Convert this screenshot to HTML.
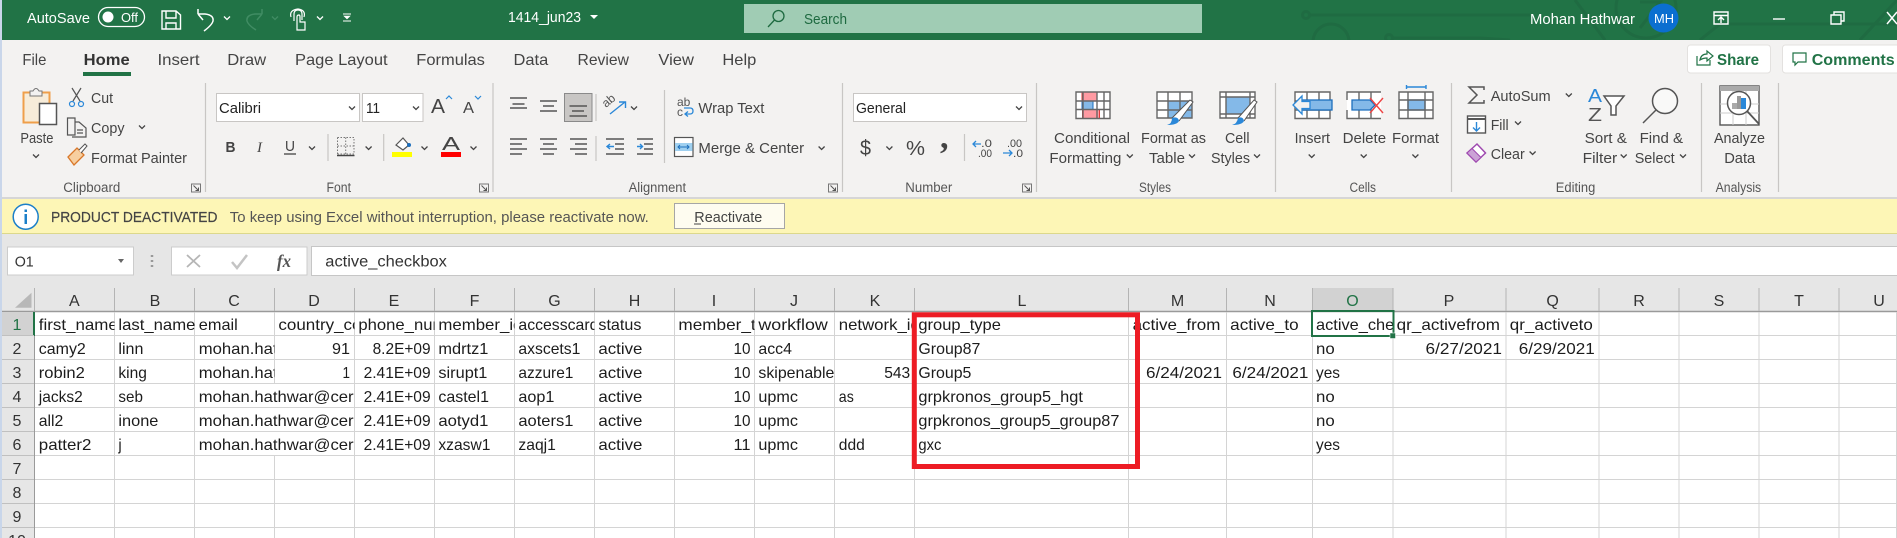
<!DOCTYPE html>
<html><head><meta charset="utf-8"><title>Excel</title>
<style>
html,body{margin:0;padding:0;background:#fff;width:1897px;height:538px;overflow:hidden}
svg{display:block}
text{font-family:"Liberation Sans",sans-serif;white-space:pre}
.r text{font-size:15px;fill:#444}
.l text{font-size:13.5px;fill:#555}
.c text{font-size:16px;fill:#1c1c1c}
.h text{font-size:16px;fill:#333;text-anchor:middle}
.w text{font-size:15px;fill:#fff}
</style></head><body>
<svg width="1897" height="538" viewBox="0 0 1897 538" xmlns="http://www.w3.org/2000/svg">
<defs>
<path id="ch" d="M-3-1.5 0 1.5 3-1.5" fill="none" stroke="#444" stroke-width="1.3"/>
<path id="chw" d="M-3-1.5 0 1.5 3-1.5" fill="none" stroke="#fff" stroke-width="1.3"/>
<g id="lau"><path d="M0 0H9V8H0Z" fill="none" stroke="#777"/><path d="M2 1.5 7 6.5M7 3.5V6.5H4" fill="none" stroke="#555"/></g>
<clipPath id="cA"><rect x="35" y="312" width="79.5" height="24"/></clipPath>
<clipPath id="cB"><rect x="115" y="312" width="79.5" height="24"/></clipPath>
<clipPath id="cC"><rect x="195" y="336" width="79.5" height="48"/></clipPath>
<clipPath id="cCD"><rect x="195" y="384" width="159.5" height="72"/></clipPath>
<clipPath id="cD"><rect x="275" y="312" width="79.5" height="24"/></clipPath>
<clipPath id="cE"><rect x="355" y="312" width="79.5" height="24"/></clipPath>
<clipPath id="cF"><rect x="435" y="312" width="79.5" height="24"/></clipPath>
<clipPath id="cG"><rect x="515" y="312" width="79.5" height="24"/></clipPath>
<clipPath id="cI"><rect x="675" y="312" width="79.5" height="24"/></clipPath>
<clipPath id="cK"><rect x="835" y="312" width="79.5" height="24"/></clipPath>
<clipPath id="cO"><rect x="1313" y="312" width="80" height="24"/></clipPath>
<clipPath id="cT"><rect x="1200" y="0" width="697" height="40"/></clipPath>
</defs>

<!-- backgrounds -->
<rect width="1897" height="538" fill="#fff"/>
<rect width="1897" height="40" fill="#217346"/>
<rect y="40" width="1897" height="157" fill="#f3f2f1"/>
<rect y="197" width="1897" height="2" fill="#d6d6d6"/>
<rect y="199" width="1897" height="34" fill="#fdf6b6"/>
<rect y="233" width="1897" height="1" fill="#dcd88c"/>
<rect y="234" width="1897" height="78" fill="#e6e6e6"/>
<rect width="2" height="538" fill="#c9d6ea"/>

<!-- circuit pattern -->
<g fill="none" stroke="#1f6b42" stroke-width="3" clip-path="url(#cT)">
<path d="M1309 15H1530"/><circle cx="1306" cy="15" r="3.5"/>
<circle cx="1331" cy="42" r="18"/><circle cx="1389" cy="38" r="3.5"/><path d="M1393 38H1480L1510 40"/>
<circle cx="1646" cy="8" r="30"/><path d="M1640 2H1660L1640 28"/>
<path d="M1575 0 1605 40M1700 40 1720 24H1897M1860 40 1897 0"/>
</g>

<!-- title bar -->
<g class="w">
<text x="27" y="23" textLength="63" lengthAdjust="spacingAndGlyphs">AutoSave</text>
<rect x="98.5" y="7.5" width="46" height="19" rx="9.5" fill="none" stroke="#fff" stroke-width="1.3"/>
<circle cx="108" cy="17" r="5.5" fill="#fff"/>
<text x="121" y="22" textLength="17" lengthAdjust="spacingAndGlyphs" style="font-size:13px">Off</text>
<text x="508" y="22" textLength="73" lengthAdjust="spacingAndGlyphs">1414_jun23</text>
<text x="1530" y="24" textLength="105" lengthAdjust="spacingAndGlyphs">Mohan Hathwar</text>
</g>
<g fill="none" stroke="#fff" stroke-width="1.4">
<path d="M162 11H176L180.500 15V29H162ZM166 11V18H176V11M166 29V23H176V29"/>
<path d="M198 14H205Q214 15 213 21 212 25 204 31M198 14V9M198 14 203 20" stroke-width="1.5"/>
<path d="M262 14H255Q246 15 247 21 248 25 256 30M262 14V9M262 14 257 20" stroke="#408c63" stroke-width="1.5"/>
<path d="M294 21V14Q294 10 298 10 302 10 302 14V20M291 17Q289 10 298 9 306 10 304 17M297 30V17Q297 15 299 15 300 15 300 17V22H305V30Z" stroke-width="1.2"/>
<path d="M343 21H351" stroke-width="1"/><path d="M344 16H350L347 19Z" fill="#fff" stroke-width=".6"/>
<path d="M343 14H351" stroke-width="1"/>
<path d="M1714 12H1728V24H1714ZM1714 15.500H1728M1721 23V17M1718 20 1721 17 1724 20"/>
<path d="M1773 19H1785"/>
<path d="M1831 15H1841V24H1831ZM1834 15V12H1844V21H1841"/>
<path d="M1887 12 1897 24M1897 12 1887 24" stroke-width="1.5"/>
</g>
<use href="#chw" x="227" y="18"/><use href="#chw" x="320" y="18"/>
<path d="M272 16.500 275 19.500 278 16.500" fill="none" stroke="#408c63" stroke-width="1.3"/>
<path d="M590 15H598L594 19Z" fill="#fff"/>

<!-- search -->
<rect x="744" y="4" width="458" height="29" fill="#a0ccb4"/>
<g fill="none" stroke="#1e6a40" stroke-width="1.3"><circle cx="778.500" cy="16" r="5.500"/><path d="M774.500 20 768 27"/></g>
<text x="804" y="24" textLength="43" lengthAdjust="spacingAndGlyphs" style="font-size:15px;fill:#1e6a40">Search</text>
<ellipse cx="1663.500" cy="18" rx="15" ry="14.500" fill="#0b6fd0"/>
<text x="1654" y="23" textLength="20" lengthAdjust="spacingAndGlyphs" style="font-size:13px;fill:#fff">MH</text>

<!-- tabs -->
<g class="r">
<text x="22.400" y="65" textLength="24" lengthAdjust="spacingAndGlyphs" style="font-size:16px">File</text>
<text x="83.700" y="65" textLength="46" lengthAdjust="spacingAndGlyphs" style="font-size:16px;font-weight:bold;fill:#333">Home</text>
<text x="157.500" y="65" textLength="42" lengthAdjust="spacingAndGlyphs" style="font-size:16px">Insert</text>
<text x="227.300" y="65" textLength="38.800" lengthAdjust="spacingAndGlyphs" style="font-size:16px">Draw</text>
<text x="295" y="65" textLength="92.600" lengthAdjust="spacingAndGlyphs" style="font-size:16px">Page Layout</text>
<text x="416.300" y="65" textLength="68.600" lengthAdjust="spacingAndGlyphs" style="font-size:16px">Formulas</text>
<text x="513.500" y="65" textLength="34.700" lengthAdjust="spacingAndGlyphs" style="font-size:16px">Data</text>
<text x="577.500" y="65" textLength="51.400" lengthAdjust="spacingAndGlyphs" style="font-size:16px">Review</text>
<text x="658.400" y="65" textLength="35.500" lengthAdjust="spacingAndGlyphs" style="font-size:16px">View</text>
<text x="722.400" y="65" textLength="33.900" lengthAdjust="spacingAndGlyphs" style="font-size:16px">Help</text>
</g>
<rect x="83" y="72" width="48" height="4" fill="#217346"/>

<!-- share / comments -->
<rect x="1687.500" y="45" width="83" height="28" rx="3" fill="#fff" stroke="#e3e1df"/>
<rect x="1782.500" y="45" width="120" height="28" rx="3" fill="#fff" stroke="#e3e1df"/>
<g fill="none" stroke="#217346" stroke-width="1.200">
<path d="M1697 56V65H1710V60M1700 60Q1701 54 1707 54V51L1713 56 1707 61V58Q1703 58 1700 60Z"/>
<path d="M1793 53H1806V62H1798L1795 65V62H1793Z"/>
</g>
<text x="1717" y="65" textLength="42" lengthAdjust="spacingAndGlyphs" style="font-size:16px;font-weight:bold;fill:#217346">Share</text>
<text x="1811.700" y="65" textLength="83" lengthAdjust="spacingAndGlyphs" style="font-size:16px;font-weight:bold;fill:#217346">Comments</text>

<!-- separators -->
<g stroke="#c8c6c4" stroke-width="1.200">
<path d="M205.500 83V192M493 83V192M842.500 83V192M1036.500 83V192M1275.500 83V192M1451.500 83V192M1701.500 83V192M1778.500 83V192"/>
<path d="M328 134V161M383.700 134V161M596 94V121M596 136V161M664.500 90V163M964.500 134V161"/>
</g>

<!-- clipboard -->
<rect x="23.500" y="92.500" width="26" height="30" fill="#f7ecd9" stroke="#ef9f4a" stroke-width="2"/>
<path d="M30 96V91H33Q36 86 39 91H42V96Z" fill="#f3f2f1" stroke="#777"/>
<rect x="39.500" y="103.500" width="17" height="21" fill="#fff" stroke="#555" stroke-width="1.500"/>
<g fill="none" stroke-width="1.200">
<path d="M72 88 80 101M81 88 73 101" stroke="#555"/>
<circle cx="72" cy="104" r="2.500" stroke="#2b88d8"/><circle cx="81" cy="104" r="2.500" stroke="#2b88d8"/>
<path d="M67.500 118H75V135H67.500ZM75 122H79L86 128V137H72" stroke="#555"/><path d="M77 130H83M77 133H83" stroke="#555"/>
</g>
<path d="M68 157 77 148 84 155 74 165Z" fill="#f7cfa0" stroke="#d9782a" stroke-width="1.300"/>
<path d="M79 150 85 144 87 146 81 153" fill="#fff" stroke="#555"/>
<g class="r">
<text x="20.400" y="143" textLength="33" lengthAdjust="spacingAndGlyphs">Paste</text>
<text x="91" y="103" textLength="22" lengthAdjust="spacingAndGlyphs">Cut</text>
<text x="91" y="133" textLength="33.500" lengthAdjust="spacingAndGlyphs">Copy</text>
<text x="91" y="163" textLength="96" lengthAdjust="spacingAndGlyphs">Format Painter</text>
</g>
<use href="#ch" x="36" y="156"/><use href="#ch" x="142" y="127"/>
<g class="l">
<text x="63.300" y="192" textLength="57" lengthAdjust="spacingAndGlyphs">Clipboard</text>
<text x="326.500" y="192" textLength="24.500" lengthAdjust="spacingAndGlyphs">Font</text>
<text x="628.600" y="192" textLength="57.500" lengthAdjust="spacingAndGlyphs">Alignment</text>
<text x="905.300" y="192" textLength="47" lengthAdjust="spacingAndGlyphs">Number</text>
<text x="1139" y="192" textLength="32" lengthAdjust="spacingAndGlyphs">Styles</text>
<text x="1349.500" y="192" textLength="26.500" lengthAdjust="spacingAndGlyphs">Cells</text>
<text x="1555.800" y="192" textLength="39.500" lengthAdjust="spacingAndGlyphs">Editing</text>
<text x="1715.600" y="192" textLength="45.600" lengthAdjust="spacingAndGlyphs">Analysis</text>
</g>
<use href="#lau" x="191.500" y="184"/><use href="#lau" x="479.500" y="184"/><use href="#lau" x="828.500" y="184"/><use href="#lau" x="1022.500" y="184"/>

<!-- font -->
<rect x="216.500" y="93.500" width="143" height="28" fill="#fff" stroke="#c8c6c4"/>
<rect x="362.500" y="93.500" width="60.500" height="28" fill="#fff" stroke="#c8c6c4"/>
<g class="r">
<text x="219" y="113" textLength="42" lengthAdjust="spacingAndGlyphs" style="fill:#222">Calibri</text>
<text x="366" y="113" textLength="14" lengthAdjust="spacingAndGlyphs" style="fill:#222">11</text>
<text x="431" y="113" textLength="14" lengthAdjust="spacingAndGlyphs" style="font-size:20px">A</text>
<text x="463" y="113" textLength="11" lengthAdjust="spacingAndGlyphs" style="font-size:16px">A</text>
<text x="225.500" y="152" textLength="10" lengthAdjust="spacingAndGlyphs" style="font-size:15px;font-weight:bold">B</text>
<text x="257" y="152" style="font-size:15px;font-style:italic;font-family:'Liberation Serif',serif">I</text>
<text x="285" y="151" textLength="10" lengthAdjust="spacingAndGlyphs" style="font-size:15px">U</text>
<text x="442" y="150" textLength="18" lengthAdjust="spacingAndGlyphs" style="font-size:18px">A</text>
</g>
<path d="M284 154H296" stroke="#444" stroke-width="1.300"/>
<path d="M446 99 449 96 452 99M475 96 478 99 481 96" fill="none" stroke="#2b88d8" stroke-width="1.200"/>
<use href="#ch" x="352" y="108"/><use href="#ch" x="416" y="108"/><use href="#ch" x="312" y="148"/><use href="#ch" x="368.600" y="148"/><use href="#ch" x="424.500" y="148"/><use href="#ch" x="473.500" y="148"/>
<path d="M337.500 137.500H354V154H337.500M337.500 137.500V154M345.700 137.500V154M337.500 146H354" fill="none" stroke="#777" stroke-dasharray="1.500 1.500"/>
<path d="M337 155.500H354.500" stroke="#444" stroke-width="1.500"/>
<path d="M396 145 403 138 409 145 403 150Z" fill="#fff" stroke="#555" stroke-width="1.200"/><circle cx="409" cy="145" r="2" fill="#1d6fbd"/>
<rect x="392" y="152" width="20" height="5" fill="#ff0"/>
<rect x="441" y="152" width="20" height="5" fill="#f00"/>

<!-- alignment -->
<rect x="564.500" y="93.500" width="27.500" height="28" fill="#c8c6c4" stroke="#8a8a8a"/>
<g stroke="#555" stroke-width="1.500">
<path d="M510 98H527M512.500 104H524.500M510 108H527"/>
<path d="M540 101H557M543 106H554M540 111H557"/>
<path d="M569.500 106H587M572 111H584M569.500 116H587"/>
<path d="M510 139H527M510 144H522M510 149H527M510 154H522"/>
<path d="M540 139H557M543 144H554M540 149H557M543 154H554"/>
<path d="M570 139H587M575 144H587M570 149H587M575 154H587"/>
<path d="M606 139H624M615 144H624M615 149H624M606 154H624"/>
<path d="M637 139H653M644 144H653M644 149H653M637 154H653"/>
</g>
<path d="M614 146.500H607M610 144 607 146.500 610 149M637 146.500H642M640 144 642.500 146.500 640 149" fill="none" stroke="#2b88d8" stroke-width="1.400"/>
<text x="606" y="108" transform="rotate(-40 606 108)" style="font-size:12px;fill:#555">ab</text>
<path d="M610 114 625 102M619 102H625.500V108" fill="none" stroke="#2b88d8" stroke-width="1.400"/>
<use href="#ch" x="634" y="108"/>
<text x="677" y="106" style="font-size:12px;fill:#555">ab</text>
<text x="677" y="116" style="font-size:12px;fill:#555">c</text>
<path d="M686 114H690Q693 114 693 111 693 108 690 108H684M688 111.500 685 114 688 116.500" fill="none" stroke="#2b88d8" stroke-width="1.300"/>
<rect x="674.500" y="137.500" width="18.500" height="19" fill="#fff" stroke="#555" stroke-width="1.200"/>
<rect x="675" y="143" width="17.500" height="8" fill="#9fd0f0"/>
<path d="M678 147H689M680 145 678 147 680 149M687 145 689 147 687 149" fill="none" stroke="#1d6fbd"/>
<g class="r">
<text x="698.400" y="113" textLength="66" lengthAdjust="spacingAndGlyphs">Wrap Text</text>
<text x="698.400" y="153" textLength="105.700" lengthAdjust="spacingAndGlyphs">Merge &amp; Center</text>
</g>
<use href="#ch" x="821.600" y="148"/>

<!-- number -->
<rect x="853.500" y="93.500" width="173" height="28" fill="#fff" stroke="#c8c6c4"/>
<g class="r">
<text x="856" y="113" textLength="50" lengthAdjust="spacingAndGlyphs" style="fill:#222">General</text>
<text x="860" y="155" textLength="11" lengthAdjust="spacingAndGlyphs" style="font-size:21px">$</text>
<text x="906" y="155" textLength="19" lengthAdjust="spacingAndGlyphs" style="font-size:20px">%</text>
<text x="940" y="148" style="font-size:34px;font-weight:bold;font-family:'Liberation Serif',serif">,</text>
<text x="981" y="147" textLength="11" lengthAdjust="spacingAndGlyphs" style="font-size:11px">.0</text>
<text x="978" y="157" textLength="14" lengthAdjust="spacingAndGlyphs" style="font-size:11px">.00</text>
<text x="1007" y="147" textLength="15" lengthAdjust="spacingAndGlyphs" style="font-size:11px">.00</text>
<text x="1013" y="157" textLength="10" lengthAdjust="spacingAndGlyphs" style="font-size:11px">.0</text>
</g>
<path d="M981 144H973M976 141 973 144 976 147M1003 153H1012M1009 150 1012 153 1009 156" fill="none" stroke="#2b88d8" stroke-width="1.300"/>
<use href="#ch" x="1019" y="108"/><use href="#ch" x="889.400" y="148"/>

<!-- styles icons -->
<g>
<rect x="1076" y="92" width="34" height="26.500" fill="#fff"/>
<rect x="1082" y="92" width="15" height="9" fill="#ff9aa2" stroke="#e03a3a"/>
<rect x="1082.500" y="109.500" width="17" height="9" fill="#ff9aa2" stroke="#e03a3a"/>
<rect x="1082" y="101" width="11" height="8.500" fill="#84b9e8" stroke="#1d6fbd"/>
<path d="M1076 92H1110V118.500H1076ZM1083 92V118.500M1097 92V118.500M1104 92V118.500M1076 101H1110M1076 109.500H1110" fill="none" stroke="#666" stroke-width="1.400"/>
</g>
<g>
<rect x="1157" y="92" width="35" height="26" fill="#fff"/>
<rect x="1168" y="101" width="24" height="17" fill="#84b9e8" stroke="#1d6fbd"/>
<path d="M1157 92H1192V118H1157ZM1168 92V118M1180 92V118M1157 101H1192M1157 110H1192" fill="none" stroke="#666" stroke-width="1.400"/>
<path d="M1172 118 1190 100 1193 102 1179 121" fill="#fff" stroke="#555"/>
<path d="M1167 125Q1172 124 1172 118 1178 116 1179 121 1177 125 1167 125Z" fill="#2b88d8"/>
</g>
<g>
<rect x="1220" y="92" width="35" height="26" fill="#fff"/>
<rect x="1226" y="97" width="24" height="17" fill="#84b9e8" stroke="#1d6fbd"/>
<path d="M1220 92H1255V118H1220ZM1226 92V118M1250 92V118M1220 97H1255M1220 114H1255" fill="none" stroke="#666" stroke-width="1.400"/>
<path d="M1238 118 1254 100 1257 102 1244 121" fill="#fff" stroke="#555"/>
<path d="M1232 125Q1237 124 1238 118 1243 116 1244 121 1242 125 1232 125Z" fill="#2b88d8"/>
</g>
<g class="r">
<text x="1054" y="143" textLength="76" lengthAdjust="spacingAndGlyphs">Conditional</text>
<text x="1049.400" y="163" textLength="72" lengthAdjust="spacingAndGlyphs">Formatting</text>
<text x="1141" y="143" textLength="65" lengthAdjust="spacingAndGlyphs">Format as</text>
<text x="1149" y="163" textLength="36" lengthAdjust="spacingAndGlyphs">Table</text>
<text x="1225" y="143" textLength="24.500" lengthAdjust="spacingAndGlyphs">Cell</text>
<text x="1211" y="163" textLength="39" lengthAdjust="spacingAndGlyphs">Styles</text>
<text x="1294.600" y="143" textLength="35.400" lengthAdjust="spacingAndGlyphs">Insert</text>
<text x="1342.600" y="143" textLength="43.500" lengthAdjust="spacingAndGlyphs">Delete</text>
<text x="1392" y="143" textLength="47" lengthAdjust="spacingAndGlyphs">Format</text>
<text x="1490.700" y="101" textLength="60" lengthAdjust="spacingAndGlyphs">AutoSum</text>
<text x="1490.700" y="130" textLength="18" lengthAdjust="spacingAndGlyphs">Fill</text>
<text x="1490.700" y="159" textLength="34" lengthAdjust="spacingAndGlyphs">Clear</text>
<text x="1584.600" y="143" textLength="42.300" lengthAdjust="spacingAndGlyphs">Sort &amp;</text>
<text x="1582.600" y="163" textLength="34.600" lengthAdjust="spacingAndGlyphs">Filter</text>
<text x="1639.600" y="143" textLength="43.500" lengthAdjust="spacingAndGlyphs">Find &amp;</text>
<text x="1634.700" y="163" textLength="40" lengthAdjust="spacingAndGlyphs">Select</text>
<text x="1714" y="143" textLength="51" lengthAdjust="spacingAndGlyphs">Analyze</text>
<text x="1724.200" y="163" textLength="31" lengthAdjust="spacingAndGlyphs">Data</text>
</g>
<use href="#ch" x="1129.800" y="156"/><use href="#ch" x="1192" y="156"/><use href="#ch" x="1257" y="156"/>
<use href="#ch" x="1311.700" y="156"/><use href="#ch" x="1363.700" y="156"/><use href="#ch" x="1415.400" y="156"/>
<use href="#ch" x="1568.800" y="95"/><use href="#ch" x="1518" y="123"/><use href="#ch" x="1532.600" y="153"/>
<use href="#ch" x="1623.700" y="156"/><use href="#ch" x="1683" y="156"/>

<!-- cells icons -->
<g>
<rect x="1295" y="92" width="35" height="26.500" fill="#fff"/>
<path d="M1295 92H1330V118.500H1295ZM1307 92V118.500M1319 92V118.500M1295 101H1330M1295 110H1330" fill="none" stroke="#666" stroke-width="1.400"/>
<rect x="1302" y="100" width="30" height="10" fill="#84b9e8" stroke="#1d6fbd" stroke-width="1.300"/>
<path d="M1293 105 1302 96V101.500H1310V108.500H1302V114Z" fill="#f3f2f1" stroke="#2b88d8" stroke-width="1.300"/>
</g>
<g>
<rect x="1347" y="92" width="34" height="26.500" fill="#fff"/>
<path d="M1347 100V92H1381M1347 110V118.500H1381M1359 92V100M1359 110V118.500M1371 92V118.500" fill="none" stroke="#666" stroke-width="1.400"/>
<path d="M1352 100H1370L1375 105 1370 110H1352Z" fill="#84b9e8" stroke="#1d6fbd" stroke-width="1.300"/>
<path d="M1370 98 1383 113M1383 98 1370 113" stroke="#ee4444" stroke-width="1.400"/>
</g>
<g>
<rect x="1399" y="92" width="34" height="26.500" fill="#fff"/>
<rect x="1408" y="100" width="17" height="10" fill="#84b9e8" stroke="#1d6fbd" stroke-width="1.300"/>
<path d="M1399 92H1433V118.500H1399ZM1408 92V118.500M1425 92V118.500M1399 100H1433M1399 110H1433" fill="none" stroke="#666" stroke-width="1.400"/>
<path d="M1406.500 87H1426M1406.500 85V89M1426 85V89" stroke="#2b88d8" stroke-width="1.400"/>
</g>

<!-- editing icons -->
<path d="M1484 90V87H1469L1477 95 1469 103H1484V100" fill="none" stroke="#555" stroke-width="1.500"/>
<rect x="1467.500" y="116" width="18" height="17" fill="#fff" stroke="#555" stroke-width="1.400"/>
<path d="M1467.500 119H1485.500" stroke="#555" stroke-width="2"/>
<path d="M1476.500 122V131M1473 127.500 1476.500 131 1480 127.500" fill="none" stroke="#2b88d8" stroke-width="1.400"/>
<path d="M1467 153 1477 144 1485.500 153 1476 162Z" fill="#fff" stroke="#9f4ab0" stroke-width="1.500"/>
<path d="M1467 153 1472 148.500 1481 157.500 1476 162Z" fill="#cba2d6" stroke="#9f4ab0" stroke-width="1"/>
<text x="1588" y="102" textLength="14" lengthAdjust="spacingAndGlyphs" style="font-size:18px;fill:#2b88d8">A</text>
<text x="1588" y="121" textLength="14" lengthAdjust="spacingAndGlyphs" style="font-size:18px;fill:#555">Z</text>
<path d="M1604 96H1624L1616 106V115H1611V106Z" fill="#fff" stroke="#555" stroke-width="1.500"/>
<circle cx="1665" cy="101" r="12.500" fill="#fff" fill-opacity=".5" stroke="#555" stroke-width="1.500"/>
<path d="M1656 110 1643 123" stroke="#555" stroke-width="1.500"/>

<!-- analyze icon -->
<rect x="1720" y="86" width="39" height="39" fill="#fff" stroke="#555" stroke-width="1.400"/>
<rect x="1720" y="86" width="39" height="5" fill="#aaa"/>
<path d="M1720 104H1759M1720 113H1759M1733 91V125M1746 91V125" stroke="#ccc"/>
<circle cx="1739" cy="103" r="11.500" fill="#fff" stroke="#555" stroke-width="1.500"/>
<rect x="1732" y="103" width="5" height="6" fill="#aaa"/><rect x="1737" y="96" width="4" height="13" fill="#999"/><rect x="1741" y="98" width="5" height="11" fill="#2b88d8"/>
<path d="M1747 111 1759 124" stroke="#555" stroke-width="1.800"/>

<!-- info bar -->
<circle cx="25.700" cy="216.700" r="12.500" fill="#fff" stroke="#1b7fc9" stroke-width="1.500"/>
<rect x="24.500" y="214" width="2.500" height="10" fill="#1b7fc9"/><rect x="24.500" y="209.500" width="2.500" height="2.500" fill="#1b7fc9"/>
<text x="51" y="222" textLength="166.500" lengthAdjust="spacingAndGlyphs" style="font-size:15px;fill:#444;stroke:#444;stroke-width:.2">PRODUCT DEACTIVATED</text>
<text x="229.800" y="222" textLength="419" lengthAdjust="spacingAndGlyphs" style="font-size:15px;fill:#555">To keep using Excel without interruption, please reactivate now.</text>
<rect x="674.500" y="203.500" width="110" height="25" fill="#fefcf0" stroke="#a6a6a6"/>
<text x="694.300" y="222" textLength="68" lengthAdjust="spacingAndGlyphs" style="font-size:15px;fill:#444">Reactivate</text>
<path d="M694 224H701" stroke="#444"/>

<!-- formula bar -->
<rect x="7.500" y="247" width="126" height="28" fill="#fff" stroke="#ccc"/>
<text x="14.700" y="266.700" textLength="19" lengthAdjust="spacingAndGlyphs" style="font-size:15px;fill:#333">O1</text>
<path d="M118 259H124L121 263Z" fill="#666"/>
<path d="M152 255V257M152 260V262M152 265V267" stroke="#999" stroke-width="2.500"/>
<rect x="171.500" y="247" width="135.500" height="28" fill="#fff" stroke="#ccc"/>
<path d="M187 255 200 267M200 255 187 267" stroke="#b5b5b5" stroke-width="1.800"/>
<path d="M232 262 237 268 247 255" fill="none" stroke="#c4c4c4" stroke-width="2.500"/>
<text x="277" y="267" textLength="14" lengthAdjust="spacingAndGlyphs" style="font-size:18px;font-style:italic;font-weight:bold;font-family:'Liberation Serif',serif;fill:#555">fx</text>
<rect x="311.500" y="246.500" width="1590" height="29" fill="#fff" stroke="#c6c6c6"/>
<text x="325.300" y="266.700" textLength="121.600" lengthAdjust="spacingAndGlyphs" style="font-size:15.500px;fill:#333">active_checkbox</text>

<!-- column headers -->
<rect x="1312.500" y="288" width="80.500" height="23" fill="#d2d2d2"/>
<path d="M2 311.500H1897" stroke="#9a9a9a" stroke-width="1.500"/>
<g stroke="#b4b4b4">
<path d="M34.500 288V311M114.500 288V311M194.500 288V311M274.500 288V311M354.500 288V311M434.500 288V311M514.500 288V311M594.500 288V311M674.500 288V311M754.500 288V311M834.500 288V311M914.500 288V311M1128.500 288V311M1226.500 288V311M1312.500 288V311M1393 288V311M1506 288V311M1599 288V311M1679 288V311M1759 288V311M1839 288V311"/>
</g>
<path d="M31.500 292.700V307.700H15Z" fill="#b8b8b8"/>
<g class="h">
<text x="74.300" y="306">A</text><text x="155" y="306">B</text><text x="234" y="306">C</text><text x="314" y="306">D</text><text x="394" y="306">E</text><text x="474.500" y="306">F</text><text x="554.500" y="306">G</text><text x="634.500" y="306">H</text><text x="714" y="306">I</text><text x="794" y="306">J</text><text x="875" y="306">K</text><text x="1022" y="306">L</text><text x="1177.500" y="306">M</text><text x="1270" y="306">N</text><text x="1352.500" y="306" style="fill:#217346">O</text><text x="1449" y="306">P</text><text x="1552.600" y="306">Q</text><text x="1639" y="306">R</text><text x="1719" y="306">S</text><text x="1799" y="306">T</text><text x="1879" y="306">U</text>
</g>

<!-- row headers -->
<rect x="2" y="312" width="32" height="226" fill="#e6e6e6"/>
<rect x="2" y="312" width="32" height="24" fill="#d2d2d2"/>
<path d="M34.500 312V538" stroke="#9a9a9a"/>
<path d="M34 312V336" stroke="#217346" stroke-width="2"/>
<g stroke="#c0c0c0"><path d="M2 335.500H34M2 359.500H34M2 383.500H34M2 407.500H34M2 431.500H34M2 455.500H34M2 479.500H34M2 503.500H34M2 527.500H34"/></g>
<g class="h">
<text x="17" y="330" style="fill:#217346">1</text><text x="17" y="354">2</text><text x="17" y="378">3</text><text x="17" y="402">4</text><text x="17" y="426">5</text><text x="17" y="450">6</text><text x="17" y="474">7</text><text x="17" y="498">8</text><text x="17" y="522">9</text><text x="17" y="546">10</text>
</g>

<!-- grid -->
<g stroke="#d4d4d4">
<path d="M35 335.500H1897M35 359.500H1897M35 383.500H1897M35 407.500H1897M35 431.500H1897M35 455.500H1897M35 479.500H1897M35 503.500H1897M35 527.500H1897"/>
<path d="M114.500 312V538M194.500 312V538M274.500 312V384M274.500 456V538M354.500 312V538M434.500 312V538M514.500 312V538M594.500 312V538M674.500 312V538M754.500 312V538M834.500 312V538M914.500 312V538M1128.500 312V538M1226.500 312V538M1312.500 312V538M1393 312V538M1506 312V538M1599 312V538M1679 312V538M1759 312V538M1839 312V538M1896.500 312V538"/>
</g>

<!-- cells -->
<g class="c">
<text x="38.800" y="330" textLength="79" lengthAdjust="spacingAndGlyphs" clip-path="url(#cA)">first_name</text>
<text x="118.400" y="330" textLength="77" lengthAdjust="spacingAndGlyphs" clip-path="url(#cB)">last_name</text>
<text x="198.800" y="330" textLength="39" lengthAdjust="spacingAndGlyphs">email</text>
<text x="278.400" y="330" textLength="102" lengthAdjust="spacingAndGlyphs" clip-path="url(#cD)">country_code</text>
<text x="358.400" y="330" textLength="112" lengthAdjust="spacingAndGlyphs" clip-path="url(#cE)">phone_number</text>
<text x="438.400" y="330" textLength="84" lengthAdjust="spacingAndGlyphs" clip-path="url(#cF)">member_id</text>
<text x="518.400" y="330" textLength="80" lengthAdjust="spacingAndGlyphs" clip-path="url(#cG)">accesscard</text>
<text x="598.400" y="330" textLength="43" lengthAdjust="spacingAndGlyphs">status</text>
<text x="678.400" y="330" textLength="105" lengthAdjust="spacingAndGlyphs" clip-path="url(#cI)">member_type</text>
<text x="758.400" y="330" textLength="69.400" lengthAdjust="spacingAndGlyphs">workflow</text>
<text x="838.800" y="330" textLength="81" lengthAdjust="spacingAndGlyphs" clip-path="url(#cK)">network_id</text>
<text x="918.400" y="330" textLength="82.500" lengthAdjust="spacingAndGlyphs">group_type</text>
<text x="1132.600" y="330" textLength="87.800" lengthAdjust="spacingAndGlyphs">active_from</text>
<text x="1230.200" y="330" textLength="68.400" lengthAdjust="spacingAndGlyphs">active_to</text>
<text x="1316" y="330" textLength="121" lengthAdjust="spacingAndGlyphs" clip-path="url(#cO)">active_checkbox</text>
<text x="1396.700" y="330" textLength="103.300" lengthAdjust="spacingAndGlyphs">qr_activefrom</text>
<text x="1509.800" y="330" textLength="83" lengthAdjust="spacingAndGlyphs">qr_activeto</text>

<text x="38.800" y="354" textLength="47" lengthAdjust="spacingAndGlyphs">camy2</text>
<text x="118.400" y="354" textLength="25" lengthAdjust="spacingAndGlyphs">linn</text>
<text x="198.800" y="354" textLength="214" lengthAdjust="spacingAndGlyphs" clip-path="url(#cC)">mohan.hathwar@cerner.com</text>
<text x="332" y="354" textLength="18" lengthAdjust="spacingAndGlyphs">91</text>
<text x="372.600" y="354" textLength="58" lengthAdjust="spacingAndGlyphs">8.2E+09</text>
<text x="438.400" y="354" textLength="50" lengthAdjust="spacingAndGlyphs">mdrtz1</text>
<text x="518.400" y="354" textLength="62" lengthAdjust="spacingAndGlyphs">axscets1</text>
<text x="598.400" y="354" textLength="44" lengthAdjust="spacingAndGlyphs">active</text>
<text x="733.500" y="354" textLength="17" lengthAdjust="spacingAndGlyphs">10</text>
<text x="758.400" y="354" textLength="33.500" lengthAdjust="spacingAndGlyphs">acc4</text>
<text x="918.400" y="354" textLength="62" lengthAdjust="spacingAndGlyphs">Group87</text>
<text x="1316" y="354" textLength="18.700" lengthAdjust="spacingAndGlyphs">no</text>
<text x="1425.500" y="354" textLength="76.500" lengthAdjust="spacingAndGlyphs">6/27/2021</text>
<text x="1518.800" y="354" textLength="76" lengthAdjust="spacingAndGlyphs">6/29/2021</text>

<text x="38.800" y="378" textLength="46" lengthAdjust="spacingAndGlyphs">robin2</text>
<text x="118.400" y="378" textLength="28.500" lengthAdjust="spacingAndGlyphs">king</text>
<text x="198.800" y="378" textLength="214" lengthAdjust="spacingAndGlyphs" clip-path="url(#cC)">mohan.hathwar@cerner.com</text>
<text x="342.500" y="378" textLength="7.500" lengthAdjust="spacingAndGlyphs">1</text>
<text x="363.600" y="378" textLength="67" lengthAdjust="spacingAndGlyphs">2.41E+09</text>
<text x="438.400" y="378" textLength="49" lengthAdjust="spacingAndGlyphs">sirupt1</text>
<text x="518.400" y="378" textLength="55" lengthAdjust="spacingAndGlyphs">azzure1</text>
<text x="598.400" y="378" textLength="44" lengthAdjust="spacingAndGlyphs">active</text>
<text x="733.500" y="378" textLength="17" lengthAdjust="spacingAndGlyphs">10</text>
<text x="758.400" y="378" textLength="76" lengthAdjust="spacingAndGlyphs">skipenable</text>
<text x="884.200" y="378" textLength="26" lengthAdjust="spacingAndGlyphs">543</text>
<text x="918.400" y="378" textLength="53" lengthAdjust="spacingAndGlyphs">Group5</text>
<text x="1146" y="378" textLength="76" lengthAdjust="spacingAndGlyphs">6/24/2021</text>
<text x="1232.400" y="378" textLength="76" lengthAdjust="spacingAndGlyphs">6/24/2021</text>
<text x="1316" y="378" textLength="24" lengthAdjust="spacingAndGlyphs">yes</text>

<text x="38.800" y="402" textLength="44" lengthAdjust="spacingAndGlyphs">jacks2</text>
<text x="118.400" y="402" textLength="24.500" lengthAdjust="spacingAndGlyphs">seb</text>
<text x="198.800" y="402" textLength="214" lengthAdjust="spacingAndGlyphs" clip-path="url(#cCD)">mohan.hathwar@cerner.com</text>
<text x="363.600" y="402" textLength="67" lengthAdjust="spacingAndGlyphs">2.41E+09</text>
<text x="438.400" y="402" textLength="50.600" lengthAdjust="spacingAndGlyphs">castel1</text>
<text x="518.400" y="402" textLength="36" lengthAdjust="spacingAndGlyphs">aop1</text>
<text x="598.400" y="402" textLength="44" lengthAdjust="spacingAndGlyphs">active</text>
<text x="733.500" y="402" textLength="17" lengthAdjust="spacingAndGlyphs">10</text>
<text x="758.400" y="402" textLength="39.600" lengthAdjust="spacingAndGlyphs">upmc</text>
<text x="838.800" y="402" textLength="15" lengthAdjust="spacingAndGlyphs">as</text>
<text x="918.400" y="402" textLength="164.500" lengthAdjust="spacingAndGlyphs">grpkronos_group5_hgt</text>
<text x="1316" y="402" textLength="18.700" lengthAdjust="spacingAndGlyphs">no</text>

<text x="38.800" y="426" textLength="24.500" lengthAdjust="spacingAndGlyphs">all2</text>
<text x="118.400" y="426" textLength="40" lengthAdjust="spacingAndGlyphs">inone</text>
<text x="198.800" y="426" textLength="214" lengthAdjust="spacingAndGlyphs" clip-path="url(#cCD)">mohan.hathwar@cerner.com</text>
<text x="363.600" y="426" textLength="67" lengthAdjust="spacingAndGlyphs">2.41E+09</text>
<text x="438.400" y="426" textLength="50" lengthAdjust="spacingAndGlyphs">aotyd1</text>
<text x="518.400" y="426" textLength="55" lengthAdjust="spacingAndGlyphs">aoters1</text>
<text x="598.400" y="426" textLength="44" lengthAdjust="spacingAndGlyphs">active</text>
<text x="733.500" y="426" textLength="17" lengthAdjust="spacingAndGlyphs">10</text>
<text x="758.400" y="426" textLength="39.600" lengthAdjust="spacingAndGlyphs">upmc</text>
<text x="918.400" y="426" textLength="201" lengthAdjust="spacingAndGlyphs">grpkronos_group5_group87</text>
<text x="1316" y="426" textLength="18.700" lengthAdjust="spacingAndGlyphs">no</text>

<text x="38.800" y="450" textLength="52.600" lengthAdjust="spacingAndGlyphs">patter2</text>
<text x="118.400" y="450" textLength="3.300" lengthAdjust="spacingAndGlyphs">j</text>
<text x="198.800" y="450" textLength="214" lengthAdjust="spacingAndGlyphs" clip-path="url(#cCD)">mohan.hathwar@cerner.com</text>
<text x="363.600" y="450" textLength="67" lengthAdjust="spacingAndGlyphs">2.41E+09</text>
<text x="438.400" y="450" textLength="52" lengthAdjust="spacingAndGlyphs">xzasw1</text>
<text x="518.400" y="450" textLength="37.500" lengthAdjust="spacingAndGlyphs">zaqj1</text>
<text x="598.400" y="450" textLength="44" lengthAdjust="spacingAndGlyphs">active</text>
<text x="733.500" y="450" textLength="17" lengthAdjust="spacingAndGlyphs">11</text>
<text x="758.400" y="450" textLength="39.600" lengthAdjust="spacingAndGlyphs">upmc</text>
<text x="838.800" y="450" textLength="26" lengthAdjust="spacingAndGlyphs">ddd</text>
<text x="918.400" y="450" textLength="23" lengthAdjust="spacingAndGlyphs">gxc</text>
<text x="1316" y="450" textLength="24" lengthAdjust="spacingAndGlyphs">yes</text>
</g>

<!-- selection -->
<rect x="1312" y="311" width="81.500" height="25" fill="none" stroke="#217346" stroke-width="2"/>
<rect x="1390" y="333" width="5.500" height="5.500" fill="#217346" stroke="#fff" stroke-width=".5"/>

<!-- red box -->
<rect x="914.300" y="314.800" width="223.200" height="151.700" fill="none" stroke="#ed1c24" stroke-width="5"/>
</svg>
</body></html>
